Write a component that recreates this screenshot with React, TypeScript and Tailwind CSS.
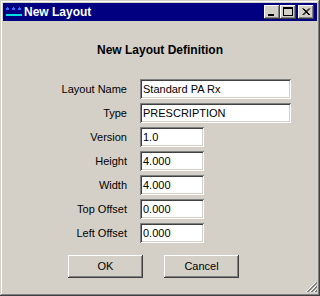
import React from "react";

const raised =
  "shadow-[inset_-1px_-1px_#404040,inset_1px_1px_#ffffff,inset_-2px_-2px_#808080,inset_2px_2px_#d4d0c8]";
const sunken =
  "shadow-[inset_1px_1px_#808080,inset_-1px_-1px_#ffffff,inset_2px_2px_#404040,inset_-2px_-2px_#d4d0c8]";

function TitleBtn({ children, className = "" }: { children: React.ReactNode; className?: string }) {
  return (
    <div className={`w-[16px] h-[14px] bg-[#d4d0c8] ${raised} flex items-center justify-center ${className}`}>
      {children}
    </div>
  );
}

function Field({ label, value, wide }: { label: string; value: string; wide?: boolean }) {
  return (
    <div className="flex items-center h-[20px]">
      <div className="w-[124px] text-right text-[11px] text-black leading-none">{label}</div>
      <div
        className={`ml-[13px] h-[20px] bg-white ${sunken} ${wide ? "w-[151px]" : "w-[64px]"} flex items-center pl-[3px] text-[11px] text-black leading-none`}
      >
        {value}
      </div>
    </div>
  );
}

function Btn({ label }: { label: string }) {
  return (
    <div className={`w-[75px] h-[23px] bg-[#d4d0c8] ${raised} flex items-center justify-center text-[11px] text-black`}>
      {label}
    </div>
  );
}

export default function App() {
  return (
    <div
      className={`relative w-[320px] h-[296px] bg-[#d4d0c8] p-[3px] flex flex-col ${"shadow-[inset_-1px_-1px_#404040,inset_1px_1px_#d4d0c8,inset_-2px_-2px_#808080,inset_2px_2px_#ffffff]"}`}
      style={{ fontFamily: '"Liberation Sans", Arial, sans-serif' }}
    >
      <div className="h-[18px] bg-[#000080] flex items-center pl-[2px] pr-[3px]">
        <svg width="17" height="12" viewBox="0 0 17 12" className="shrink-0">
          <rect x="1" y="2" width="3" height="2" fill="#3a6cff" />
          <rect x="2" y="1" width="1" height="1" fill="#3a6cff" />
          <rect x="7" y="2" width="3" height="2" fill="#3a6cff" />
          <rect x="8" y="1" width="1" height="1" fill="#3a6cff" />
          <rect x="13" y="2" width="3" height="2" fill="#3a6cff" />
          <rect x="14" y="1" width="1" height="1" fill="#3a6cff" />
          <rect x="1" y="8" width="16" height="2" fill="#00e0e0" />
        </svg>
        <span className="ml-[2px] text-white font-bold text-[12px] leading-none">New Layout</span>
        <div className="ml-auto flex items-center">
          <TitleBtn>
            <svg width="16" height="14" viewBox="0 0 16 14">
              <rect x="4" y="9" width="6" height="2" fill="#000" />
            </svg>
          </TitleBtn>
          <TitleBtn>
            <svg width="16" height="14" viewBox="0 0 16 14">
              <rect x="3.5" y="2.5" width="9" height="8" fill="none" stroke="#000" />
              <rect x="3" y="3" width="10" height="1" fill="#000" />
            </svg>
          </TitleBtn>
          <TitleBtn className="ml-[2px]">
            <svg width="16" height="14" viewBox="0 0 16 14">
              <path d="M4.5 3.5 L11 10 M11 3.5 L4.5 10 M5.5 3.5 L12 10 M12 3.5 L5.5 10" stroke="#000" strokeWidth="1" fill="none" />
            </svg>
          </TitleBtn>
        </div>
      </div>

      <div className="mt-[22px] text-center font-bold text-[12px] leading-[14px] text-black">New Layout Definition</div>

      <div className="mt-[22px] flex flex-col gap-[4px]">
        <Field label="Layout Name" value="Standard PA Rx" wide />
        <Field label="Type" value="PRESCRIPTION" wide />
        <Field label="Version" value="1.0" />
        <Field label="Height" value="4.000" />
        <Field label="Width" value="4.000" />
        <Field label="Top Offset" value="0.000" />
        <Field label="Left Offset" value="0.000" />
      </div>

      <div className="mt-[12px] flex pl-[65px] gap-[21px]">
        <Btn label="OK" />
        <Btn label="Cancel" />
      </div>

      <svg width="12" height="12" viewBox="0 0 12 12" className="absolute right-[3px] bottom-[3px]">
        <path d="M11 1 L1 11" stroke="#ffffff" />
        <path d="M12 1 L2 11 M12 2 L3 11" stroke="#808080" />
        <path d="M11 5 L5 11" stroke="#ffffff" />
        <path d="M12 5 L6 11 M12 6 L7 11" stroke="#808080" />
        <path d="M11 9 L9 11" stroke="#ffffff" />
        <path d="M12 9 L10 11 M12 10 L11 11" stroke="#808080" />
      </svg>
    </div>
  );
}
